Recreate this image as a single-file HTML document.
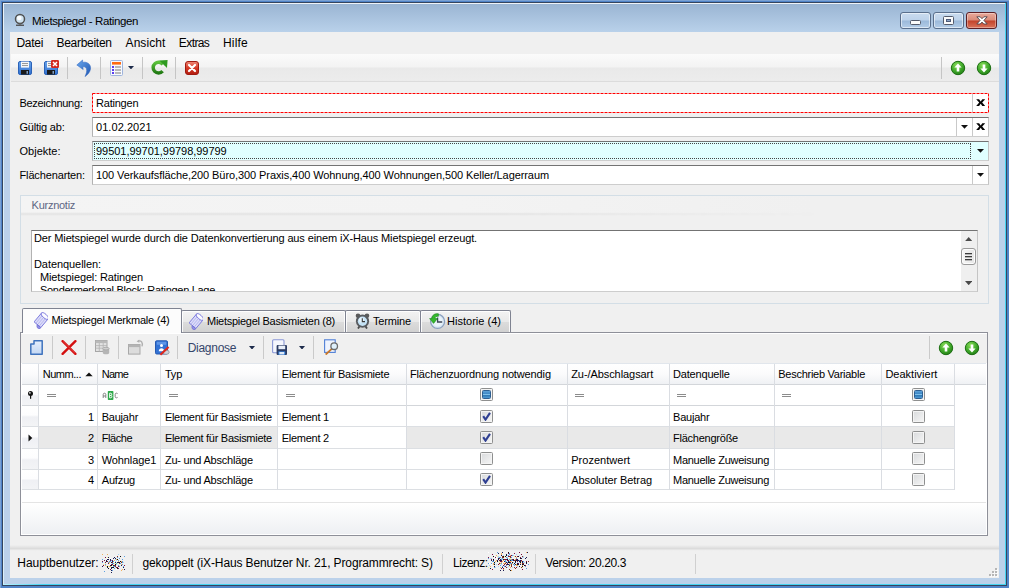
<!DOCTYPE html>
<html><head><meta charset="utf-8"><title>Mietspiegel - Ratingen</title>
<style>
html,body{margin:0;padding:0;}
body{width:1009px;height:588px;overflow:hidden;position:relative;background:#7ba2d3;font-family:"Liberation Sans",sans-serif;font-size:11px;}
div,span,svg{position:absolute;box-sizing:border-box;}
.t{white-space:pre;line-height:16px;height:16px;}
/* window frame */
#f1{left:1px;top:1px;width:1008px;height:587px;background:#4f83c8;}
#f2{left:2px;top:2px;width:1005px;height:584px;background:#35455e;}
#f3{left:3px;top:3px;width:1003px;height:582px;background:linear-gradient(90deg,#b8f2ff 0,#45d3f0 40px);}
#f3a{left:3px;top:3px;width:1002px;height:581px;background:linear-gradient(#eef3f8 0,#dcf0f8 60px);}
#f4{left:4px;top:4px;width:1001px;height:580px;background:#bbd1ea;}
#ttl{left:4px;top:4px;width:1001px;height:28px;background:linear-gradient(#9ab5d3,#b9d1ea);}
#cl{left:10px;top:32px;width:989px;height:546px;background:#f0f0f0;}
/* title buttons */
.cb{top:12px;height:17px;width:31px;border:1px solid #5a6f8c;border-radius:3px;background:linear-gradient(#c9dbef 0%,#bdd2ea 48%,#9bb9da 52%,#b4cde8 100%);box-shadow:inset 0 0 0 1px rgba(255,255,255,.55);}
#bx{border-color:#5c1f25;background:linear-gradient(#e9a99b 0%,#d98a78 48%,#c2422a 52%,#d9735a 100%);box-shadow:inset 0 0 0 1px rgba(255,255,255,.35);}
/* toolbar */
#tb{left:11px;top:54px;width:988px;height:28px;background:linear-gradient(#fbfbfb 0%,#f3f3f3 48%,#e9e9e9 52%,#ececec 100%);border-bottom:1px solid #dcdcdc;}
.sep{width:1px;background:#c5c5c5;}
/* fields */
.fld{left:92px;width:897px;height:20px;background:#fff;border:1px solid #cdcdcd;border-top-color:#737373;border-left-color:#b2b2b2;border-right-color:#c4c4c4;}
.fsep{width:1px;top:0px;height:18px;background:#c9c9c9;}
/* group */
#grp{left:20px;top:195px;width:969px;height:109px;border:1px solid #d3dee6;background:#f0f0f0;}
#grph{left:21px;top:196px;width:967px;height:17px;background:linear-gradient(90deg,#f4f4f4 0%,#f3f3f3 45%,#f0f0f0 82%);}
#grpl{left:21px;top:212px;width:800px;height:4px;background:linear-gradient(#f4f4f4,#e3e3e3 50%,#f0f0f0);-webkit-mask-image:linear-gradient(90deg,#000 60%,transparent);mask-image:linear-gradient(90deg,#000 60%,transparent);}
#ta{left:31px;top:230px;width:947px;height:62px;background:#fff;border:1px solid #cdcdcd;border-top-color:#737373;border-left-color:#b2b2b2;border-right-color:#c4c4c4;overflow:hidden;}
/* tabs */
.tab{top:310px;height:23px;border-radius:2px 2px 0 0;border:1px solid #7f8391;border-bottom:none;background:linear-gradient(#f3f3f3 0%,#e9e9e9 48%,#dcdcdc 52%,#d0d0d0 100%);box-shadow:inset 1px 1px 0 rgba(255,255,255,.85),inset -1px 0 0 rgba(255,255,255,.85);}
#tab1{left:22px;top:308px;width:160px;height:26px;border-radius:2px 2px 0 0;background:#fcfcfc;border:1px solid #7f8391;border-bottom:none;}
#pnl{left:20px;top:332px;width:968px;height:204px;border:1px solid #8e9099;background:#fff;}
#gtb{left:21px;top:333px;width:966px;height:30px;background:#f0f0f0;border-top:1px solid #fff;}
#ghd{left:22px;top:362px;width:964px;height:22px;background:linear-gradient(#ffffff,#f1f1f1);border-bottom:1px solid #d5d5d5;}
.vl{width:1px;background:#dddddd;}
.hl{height:1px;background:#dddddd;}
.chk{width:13px;height:13px;border:1px solid #8e8f8f;border-radius:1.5px;background:linear-gradient(135deg,#d8dadc,#f6f6f6);box-shadow:inset 0 0 0 1px #f4f4f4;}

</style></head>
<body>
<div id="f1"></div><div id="f2"></div><div id="f3"></div><div id="f3a"></div><div id="f4"></div><div id="ttl"></div>
<div id="cl"></div>
<!-- title icon -->
<svg style="left:13px;top:13px" width="14" height="14" viewBox="0 0 14 14"><circle cx="7" cy="6" r="4.5" fill="#cfe3f1" stroke="#4f4f4f" stroke-width="1.5"/><circle cx="6.2" cy="5" r="2.3" fill="#ffffff" opacity=".9"/><rect x="3" y="11.6" width="8" height="1.3" fill="#4a4a4a"/><rect x="5.8" y="10.6" width="2.4" height="1.2" fill="#666"/></svg>
<!-- caption buttons -->
<div class="cb" style="left:900px"><div style="left:9px;top:7px;width:11px;height:5px;background:#fbfbfb;border:1px solid #535a6b;border-radius:1.5px"></div></div>
<div class="cb" style="left:933px"><div style="left:9px;top:3px;width:11px;height:9px;background:#fbfbfb;border:1px solid #535a6b;border-radius:1.5px"></div><div style="left:12px;top:6px;width:5px;height:3px;background:#8aa3c6;border:1px solid #4d5a78"></div></div>
<div class="cb" id="bx" style="left:966px"><svg style="left:9px;top:3.4px" width="12" height="9" viewBox="0 0 12 9"><path d="M0.8 0.8 L4.2 0.8 L6 2.7 L7.8 0.8 L11.2 0.8 L7.9 4.4 L11.2 8 L7.8 8 L6 6.1 L4.2 8 L0.8 8 L4.1 4.4 Z" fill="#fff" stroke="#4e4248" stroke-width=".9" stroke-linejoin="round"/></svg></div>
<!-- main toolbar -->
<div id="tb"></div>
<div class="sep" style="left:67px;top:57px;height:22px"></div>
<div class="sep" style="left:100px;top:57px;height:22px"></div>
<div class="sep" style="left:142px;top:57px;height:22px"></div>
<div class="sep" style="left:175px;top:57px;height:22px"></div>
<div class="sep" style="left:941px;top:57px;height:22px"></div>
<svg width="0" height="0" style="left:0;top:0"><defs>
<linearGradient id="gFl" x1="0" y1="0" x2="0" y2="1"><stop offset="0" stop-color="#6aa5ea"/><stop offset="1" stop-color="#2f6fd0"/></linearGradient>
<radialGradient id="gGr" cx=".4" cy=".3" r=".8"><stop offset="0" stop-color="#8ade5a"/><stop offset=".55" stop-color="#3fa82a"/><stop offset="1" stop-color="#1d7412"/></radialGradient>
<linearGradient id="gRd" x1="0" y1="0" x2="0" y2="1"><stop offset="0" stop-color="#f08a78"/><stop offset=".5" stop-color="#d63a26"/><stop offset="1" stop-color="#b01c10"/></linearGradient>
<linearGradient id="gUn" x1="0" y1="0" x2="1" y2="1"><stop offset="0" stop-color="#6aa8ee"/><stop offset="1" stop-color="#1f55b0"/></linearGradient>
<linearGradient id="gGa" x1="0" y1="0" x2="0" y2="1"><stop offset="0" stop-color="#5cc23c"/><stop offset="1" stop-color="#217a14"/></linearGradient>
</defs></svg>
<svg style="left:18px;top:61px" width="14" height="14" viewBox="0 0 14 14"><rect x=".5" y=".5" width="13" height="13" rx="1.5" fill="url(#gFl)" stroke="#2a62b8"/><rect x="3" y="0.6" width="8" height="6" fill="#f4f6f8"/><rect x="4" y="2" width="6" height="1" fill="#9a9a9a"/><rect x="4" y="4" width="6" height="1" fill="#9a9a9a"/><rect x="3" y="9" width="8" height="4.6" fill="#1a1a1a"/><rect x="8.6" y="10" width="1.2" height="2.8" fill="#9cc0ee"/></svg>
<svg style="left:44px;top:61px" width="14" height="14" viewBox="0 0 14 14"><rect x=".5" y=".5" width="13" height="13" rx="1.5" fill="url(#gFl)" stroke="#2a62b8"/><rect x="3" y="0.6" width="8" height="6" fill="#f4f6f8"/><rect x="4" y="2" width="6" height="1" fill="#9a9a9a"/><rect x="4" y="4" width="6" height="1" fill="#9a9a9a"/><rect x="3" y="9" width="8" height="4.6" fill="#1a1a1a"/><rect x="8.6" y="10" width="1.2" height="2.8" fill="#9cc0ee"/></svg>
<svg style="left:51px;top:60px" width="8" height="8" viewBox="0 0 8 8"><rect x="0" y="0" width="8" height="8" rx="1.2" fill="#d22a1e"/><path d="M2 2 L6 6 M6 2 L2 6" stroke="#fff" stroke-width="1.5"/></svg>
<svg style="left:76px;top:59px" width="16" height="18" viewBox="0 0 16 18"><path d="M0.8 6 L6.6 1 L6.5 3.3 C11 2.5 15.2 5 14.5 10 C14 13.2 11.8 15.8 9 17.6 C10.4 14.4 11.2 11.8 10.4 9.6 C9.8 8 8.4 7.6 6.8 7.8 L7.2 10.6 Z" fill="url(#gUn)" stroke="#2a62c0" stroke-width=".5"/></svg>
<svg style="left:110px;top:60px" width="13" height="16" viewBox="0 0 13 16"><rect x=".5" y=".5" width="12" height="15" rx="1" fill="#f7f9fd" stroke="#9fb4dc"/><rect x="2" y="2" width="9" height="2.6" fill="#ff6a10"/><rect x="2" y="6" width="2" height="2" fill="#5a3cf0"/><rect x="2" y="9" width="2" height="2" fill="#5a3cf0"/><rect x="2" y="12" width="2" height="2" fill="#5a3cf0"/><rect x="5" y="6.5" width="6" height="1" fill="#7a7a7a"/><rect x="5" y="9.5" width="6" height="1" fill="#7a7a7a"/><rect x="5" y="12.5" width="6" height="1" fill="#7a7a7a"/></svg>
<svg style="left:128px;top:66px" width="6" height="3.4" viewBox="0 0 6 3.4"><path d="M0 0 L6 0 L3.0 3.4 Z" fill="#1c2a4a"/></svg>
<svg style="left:150px;top:59px" width="18" height="17" viewBox="0 0 18 17"><path d="M12.9 5.4 A5.4 5.4 0 1 0 12.6 12.2" fill="none" stroke="url(#gGa)" stroke-width="3.5"/><path d="M9.4 1.6 L17.6 1 L17 9 Z" fill="#2f9a20"/></svg>
<svg style="left:185px;top:61px" width="14" height="14" viewBox="0 0 14 14"><rect x=".5" y=".5" width="13" height="13" rx="2.5" fill="url(#gRd)" stroke="#a01a10"/><path d="M4 4 L10 10 M10 4 L4 10" stroke="#fff" stroke-width="2.2" stroke-linecap="round"/></svg>
<svg style="left:950px;top:60px" width="16" height="16" viewBox="0 0 16 16"><circle cx="8" cy="8" r="6.7" fill="url(#gGr)" stroke="#1c6e12" stroke-width="1"/><path d="M8 3.6 L11.6 7.6 L9.3 7.6 L9.3 11.6 L6.7 11.6 L6.7 7.6 L4.4 7.6 Z" fill="#fff"/></svg>
<svg style="left:976px;top:60px" width="16" height="16" viewBox="0 0 16 16"><circle cx="8" cy="8" r="6.7" fill="url(#gGr)" stroke="#1c6e12" stroke-width="1"/><path d="M8 3.6 L11.6 7.6 L9.3 7.6 L9.3 11.6 L6.7 11.6 L6.7 7.6 L4.4 7.6 Z" fill="#fff" transform="rotate(180 8 8)"/></svg>
<!-- fields -->
<div class="fld" style="top:93px;border:none"><div class="fsep" style="left:880px;top:1px"></div></div><svg style="left:92px;top:93px" width="897" height="20"><rect x=".5" y=".5" width="896" height="19" fill="none" stroke="#ff0000" stroke-width="1" stroke-dasharray="3 1"/></svg>
<div class="fld" style="top:117px"><div class="fsep" style="left:863px"></div><div class="fsep" style="left:879px"></div></div>
<div class="fld" style="top:141px;background:#e0ffff"><div style="left:1px;top:1px;width:877px;height:16px;border:1px dotted #444"></div></div>
<div class="fld" style="top:165px"><div class="fsep" style="left:879px"></div></div>
<svg style="left:975.8px;top:99px" width="9.4" height="7.2" viewBox="0 0 9.4 7.2"><path d="M0.2 0.2 L3.1 0.2 L4.7 2.4 L6.3 0.2 L9.2 0.2 L6.2 3.6 L9.2 7 L6.3 7 L4.7 4.8 L3.1 7 L0.2 7 L3.2 3.6 Z" fill="#050505"/></svg>
<svg style="left:975.8px;top:123px" width="9.4" height="7.2" viewBox="0 0 9.4 7.2"><path d="M0.2 0.2 L3.1 0.2 L4.7 2.4 L6.3 0.2 L9.2 0.2 L6.2 3.6 L9.2 7 L6.3 7 L4.7 4.8 L3.1 7 L0.2 7 L3.2 3.6 Z" fill="#050505"/></svg>
<svg style="left:961px;top:125px" width="7" height="3.8" viewBox="0 0 7 3.8"><path d="M0 0 L7 0 L3.5 3.8 Z" fill="#111"/></svg>
<svg style="left:977px;top:149px" width="7" height="3.8" viewBox="0 0 7 3.8"><path d="M0 0 L7 0 L3.5 3.8 Z" fill="#111"/></svg>
<svg style="left:977px;top:173px" width="7" height="3.8" viewBox="0 0 7 3.8"><path d="M0 0 L7 0 L3.5 3.8 Z" fill="#111"/></svg>
<!-- group -->
<div id="grp"></div><div id="grph"></div><div id="grpl"></div>
<div id="ta"></div>
<!-- tabs -->
<div class="tab" style="left:181px;width:165px"></div>
<div class="tab" style="left:345px;width:76px"></div>
<div class="tab" style="left:420px;width:91px"></div>
<div id="pnl"></div>
<div id="tab1"></div>
<div id="gtb"></div>
<div class="sep" style="left:52px;top:336px;height:23px;background:#cacaca"></div>
<div class="sep" style="left:85px;top:336px;height:23px;background:#cacaca"></div>
<div class="sep" style="left:118px;top:336px;height:23px;background:#cacaca"></div>
<div class="sep" style="left:177px;top:336px;height:23px;background:#cacaca"></div>
<div class="sep" style="left:263px;top:336px;height:23px;background:#cacaca"></div>
<div class="sep" style="left:313px;top:336px;height:23px;background:#cacaca"></div>
<div class="sep" style="left:929px;top:336px;height:23px;background:#cacaca"></div>
<svg style="left:29.5px;top:340px" width="13" height="15" viewBox="0 0 13 15"><defs><linearGradient id="gNd" x1="0" y1="0" x2="0" y2="1"><stop offset="0" stop-color="#e6effc"/><stop offset="1" stop-color="#c3d7f3"/></linearGradient></defs><path d="M4 .8 H12.2 V14.2 H.8 V4 H4 Z" fill="url(#gNd)" stroke="#3f73bd" stroke-width="1.5" stroke-linejoin="round"/></svg>
<svg style="left:61px;top:340px" width="16" height="15" viewBox="0 0 16 15"><path d="M1.6 1.2 L14.4 13.8 M14.4 1.2 L1.6 13.8" stroke="#d40f0f" stroke-width="2.4" stroke-linecap="round"/><path d="M2.2 1.6 L13.8 13 " stroke="#f06060" stroke-width=".6"/></svg>
<svg style="left:94.5px;top:340px" width="15" height="15" viewBox="0 0 15 15"><rect x=".5" y=".5" width="11.5" height="11" fill="#e2e2e2" stroke="#a6a6a6"/><rect x=".5" y=".5" width="11.5" height="2.6" fill="#b9b9b9"/><path d="M.5 5.6 H12 M.5 8.2 H12 M4.3 3 V11.5 M8.2 3 V11.5" stroke="#b3b3b3" stroke-width=".8"/><path d="M7.8 8.6 V13 C7.8 14.8 14.2 14.8 14.2 13 V8.6 Z" fill="#b5b5b5"/><ellipse cx="11" cy="8.6" rx="3.2" ry="1.3" fill="#cfcfcf" stroke="#a0a0a0" stroke-width=".7"/></svg>
<svg style="left:128px;top:339px" width="16" height="16" viewBox="0 0 16 16"><rect x=".5" y="5.5" width="11.5" height="9.6" fill="#dcdcdc" stroke="#a8a8a8"/><rect x=".5" y="5.5" width="11.5" height="2.6" fill="#b4b4b4"/><path d="M10 2.2 C13.2 1 15.2 3.6 14 7.4" fill="none" stroke="#b0b0b0" stroke-width="1.4"/><path d="M8.6 2.4 L11.2 .4 L11.4 3.8 Z" fill="#b0b0b0"/></svg>
<svg style="left:155px;top:340px" width="15" height="16" viewBox="0 0 15 16"><rect x=".5" y=".8" width="12" height="13.2" rx="1.2" fill="#3272d4" stroke="#2559b0"/><rect x="1.8" y="1.8" width="9.4" height="3" fill="#5e95e6"/><circle cx="6.5" cy="5.6" r="1.5" fill="#fff"/><path d="M3.8 11.2 C3.8 7.2 9.2 7.2 9.2 11.2 Z" fill="#fff"/><ellipse cx="11" cy="12.2" rx="3.2" ry="2.2" fill="#cfd3da" stroke="#8d929c" stroke-width=".8"/><path d="M5.4 14.8 L13.6 7" stroke="#e0261a" stroke-width="2"/></svg>
<svg style="left:249px;top:345.5px" width="6" height="3.6" viewBox="0 0 6 3.6"><path d="M0 0 L6 0 L3.0 3.6 Z" fill="#1c2a4a"/></svg>
<svg style="left:272px;top:339px" width="16" height="17" viewBox="0 0 16 17"><rect x=".6" y=".8" width="11.4" height="13" rx="1" fill="#f4f6fd" stroke="#8a98d6" stroke-width="1.1"/><rect x="4.6" y="6" width="10.4" height="10" rx="1" fill="#2b3b63"/><rect x="6.4" y="6.6" width="6.8" height="3.6" fill="#e8eef8"/><rect x="6.4" y="12.4" width="6.8" height="3.4" fill="#3a86e0"/><rect x="7.4" y="13" width="4.8" height="2.4" fill="#dfeaf8"/></svg>
<svg style="left:299px;top:345.5px" width="6" height="3.6" viewBox="0 0 6 3.6"><path d="M0 0 L6 0 L3.0 3.6 Z" fill="#1c2a4a"/></svg>
<svg style="left:324px;top:339px" width="15" height="16" viewBox="0 0 15 16"><rect x=".6" y=".8" width="10.6" height="12.6" fill="#eef3fd" stroke="#4f7fd6" stroke-width="1.1"/><path d="M8.6 9.2 L2.2 15" stroke="#c9782a" stroke-width="1.8" stroke-linecap="round"/><circle cx="10.2" cy="7.2" r="3.3" fill="#dff0fb" stroke="#6b6b6b" stroke-width="1.3"/></svg>
<svg style="left:938px;top:339.5px" width="16" height="16" viewBox="0 0 16 16"><circle cx="8" cy="8" r="6.7" fill="url(#gGr)" stroke="#1c6e12" stroke-width="1"/><path d="M8 3.6 L11.6 7.6 L9.3 7.6 L9.3 11.6 L6.7 11.6 L6.7 7.6 L4.4 7.6 Z" fill="#fff"/></svg>
<svg style="left:964px;top:339.5px" width="16" height="16" viewBox="0 0 16 16"><circle cx="8" cy="8" r="6.7" fill="url(#gGr)" stroke="#1c6e12" stroke-width="1"/><path d="M8 3.6 L11.6 7.6 L9.3 7.6 L9.3 11.6 L6.7 11.6 L6.7 7.6 L4.4 7.6 Z" fill="#fff" transform="rotate(180 8 8)"/></svg>
<div style="left:22px;top:385px;width:16px;height:20px;background:linear-gradient(#ffffff 0%,#fdfdfe 45%,#eff0f4 55%,#f3f4f6 100%)"></div>
<div style="left:22px;top:406px;width:16px;height:20px;background:linear-gradient(#ffffff 0%,#fdfdfe 45%,#eff0f4 55%,#f3f4f6 100%)"></div>
<div style="left:22px;top:427px;width:16px;height:21px;background:linear-gradient(#ffffff 0%,#fdfdfe 45%,#eff0f4 55%,#f3f4f6 100%)"></div>
<div style="left:22px;top:449px;width:16px;height:20px;background:linear-gradient(#ffffff 0%,#fdfdfe 45%,#eff0f4 55%,#f3f4f6 100%)"></div>
<div style="left:22px;top:470px;width:16px;height:19px;background:linear-gradient(#ffffff 0%,#fdfdfe 45%,#eff0f4 55%,#f3f4f6 100%)"></div>
<div style="left:39px;top:427px;width:915px;height:21px;background:#e9e9e9"></div>
<div style="left:278px;top:427px;width:128px;height:21px;background:#fff"></div>
<div style="left:22px;top:363px;width:964px;height:21px;background:linear-gradient(#ffffff 0%,#fbfbfc 50%,#eff1f4 100%);border-top:1px solid #e1e6ec"></div>
<div class="hl" style="left:22px;top:384px;width:964px;background:#d3d6da"></div>
<div class="hl" style="left:22px;top:405px;width:933px;background:#d3d6da"></div>
<div class="hl" style="left:22px;top:426px;width:933px;background:#dcdfe3"></div>
<div class="hl" style="left:22px;top:448px;width:933px;background:#dcdfe3"></div>
<div class="hl" style="left:22px;top:469px;width:933px;background:#dcdfe3"></div>
<div class="hl" style="left:22px;top:489px;width:933px;background:#dcdfe3"></div>
<div class="vl" style="left:38px;top:364px;height:126px;background:#dadde2"></div>
<div class="vl" style="left:97px;top:364px;height:126px;background:#dadde2"></div>
<div class="vl" style="left:160px;top:364px;height:126px;background:#dadde2"></div>
<div class="vl" style="left:277px;top:364px;height:126px;background:#dadde2"></div>
<div class="vl" style="left:406px;top:364px;height:126px;background:#dadde2"></div>
<div class="vl" style="left:567px;top:364px;height:126px;background:#dadde2"></div>
<div class="vl" style="left:669px;top:364px;height:126px;background:#dadde2"></div>
<div class="vl" style="left:774px;top:364px;height:126px;background:#dadde2"></div>
<div class="vl" style="left:881px;top:364px;height:126px;background:#dadde2"></div>
<div class="vl" style="left:954px;top:364px;height:126px;background:#dadde2"></div>
<div class="hl" style="left:22px;top:502px;width:964px;background:#e4e4e4"></div>
<div style="left:22px;top:503px;width:964px;height:31px;background:linear-gradient(#ffffff,#eef0f3)"></div>
<svg style="left:85px;top:372px" width="8" height="5" viewBox="0 0 8 5"><path d="M0.3 4.2 L4 0.4 L7.7 4.2 Z" fill="#111"/></svg>
<svg style="left:27px;top:391px" width="7" height="8" viewBox="0 0 7 8"><circle cx="3.5" cy="2.6" r="2.5" fill="#111"/><rect x="3" y="4" width="1.2" height="3.8" fill="#111"/><circle cx="2.9" cy="1.9" r=".8" fill="#fff"/></svg>
<div style="left:47px;top:394px;width:9px;height:1px;background:#8c8c8c"></div><div style="left:47px;top:396px;width:9px;height:1px;background:#8c8c8c"></div>
<div style="left:169px;top:394px;width:9px;height:1px;background:#8c8c8c"></div><div style="left:169px;top:396px;width:9px;height:1px;background:#8c8c8c"></div>
<div style="left:286px;top:394px;width:9px;height:1px;background:#8c8c8c"></div><div style="left:286px;top:396px;width:9px;height:1px;background:#8c8c8c"></div>
<div style="left:575px;top:394px;width:9px;height:1px;background:#8c8c8c"></div><div style="left:575px;top:396px;width:9px;height:1px;background:#8c8c8c"></div>
<div style="left:677px;top:394px;width:9px;height:1px;background:#8c8c8c"></div><div style="left:677px;top:396px;width:9px;height:1px;background:#8c8c8c"></div>
<div style="left:782px;top:394px;width:9px;height:1px;background:#8c8c8c"></div><div style="left:782px;top:396px;width:9px;height:1px;background:#8c8c8c"></div>
<svg style="left:102px;top:390px" width="17" height="11" viewBox="0 0 17 11"><rect x="5.8" y="1" width="5.6" height="9" rx=".8" fill="#2fa84a"/><path d="M1.2 8 V4.4 C1.2 2.8 3.8 2.8 3.8 4.4 V8 M1.2 6 H3.8" fill="none" stroke="#777" stroke-width=".9"/><path d="M7.6 3.2 V7.8 H9 C10.2 7.8 10.2 5.6 9 5.5 H7.6 M9 5.5 C10 5.4 10 3.2 9 3.2 H7.6" fill="none" stroke="#fff" stroke-width=".9"/><path d="M15.6 3.6 C14.8 2.8 13.2 3 13.2 4.4 V6.6 C13.2 8 14.8 8.2 15.6 7.4" fill="none" stroke="#777" stroke-width=".9"/></svg>
<svg style="left:28px;top:434px" width="5" height="8" viewBox="0 0 5 8"><path d="M0.5 0.5 L4.3 4 L0.5 7.5 Z" fill="#111"/></svg>
<div class="chk" style="left:480px;top:410px"><svg style="left:1px;top:1px" width="9" height="9" viewBox="0 0 9 9"><path d="M1.2 4.2 L3.5 7.6 L8 0.9" fill="none" stroke="#2f3f92" stroke-width="2.1"/></svg></div>
<div class="chk" style="left:912px;top:410px"></div>
<div class="chk" style="left:480px;top:431px"><svg style="left:1px;top:1px" width="9" height="9" viewBox="0 0 9 9"><path d="M1.2 4.2 L3.5 7.6 L8 0.9" fill="none" stroke="#2f3f92" stroke-width="2.1"/></svg></div>
<div class="chk" style="left:912px;top:431px"></div>
<div class="chk" style="left:480px;top:452px"></div>
<div class="chk" style="left:912px;top:452px"></div>
<div class="chk" style="left:480px;top:473px"><svg style="left:1px;top:1px" width="9" height="9" viewBox="0 0 9 9"><path d="M1.2 4.2 L3.5 7.6 L8 0.9" fill="none" stroke="#2f3f92" stroke-width="2.1"/></svg></div>
<div class="chk" style="left:912px;top:473px"></div>
<div class="chk" style="left:480px;top:388px"><div style="left:1px;top:1px;width:9px;height:9px;background:linear-gradient(#5fa3d8 0%,#3f88c6 35%,#7fc0ea 50%,#2f78b5 65%,#4f9ad4 100%);border:1px solid #2d5f92;border-radius:1.5px"></div></div>
<div class="chk" style="left:912px;top:388px"><div style="left:1px;top:1px;width:9px;height:9px;background:linear-gradient(#5fa3d8 0%,#3f88c6 35%,#7fc0ea 50%,#2f78b5 65%,#4f9ad4 100%);border:1px solid #2d5f92;border-radius:1.5px"></div></div>
<svg style="left:34px;top:312px" width="14" height="17" viewBox="0 0 14 17"><g transform="rotate(40 7 8.5)"><rect x="2.6" y="2.5" width="8.8" height="11.5" fill="#dcdcf8" stroke="#7a78dc" stroke-width=".9"/><path d="M4.8 4.4 V13.6 M7 4.4 V13.6 M9.2 4.4 V13.6" stroke="#a9a9ee" stroke-width=".7"/><ellipse cx="7" cy="2.6" rx="4.5" ry="2" fill="#fbfbff" stroke="#7a78dc" stroke-width=".9"/><path d="M6.6 14 H11.4 V15.8 C10 17.2 7.6 16.6 6.6 14 Z" fill="#908ee6" stroke="#6a68d0" stroke-width=".6"/></g></svg>
<svg style="left:189px;top:313px" width="14" height="17" viewBox="0 0 14 17"><g transform="rotate(40 7 8.5)"><rect x="2.6" y="2.5" width="8.8" height="11.5" fill="#dcdcf8" stroke="#7a78dc" stroke-width=".9"/><path d="M4.8 4.4 V13.6 M7 4.4 V13.6 M9.2 4.4 V13.6" stroke="#a9a9ee" stroke-width=".7"/><ellipse cx="7" cy="2.6" rx="4.5" ry="2" fill="#fbfbff" stroke="#7a78dc" stroke-width=".9"/><path d="M6.6 14 H11.4 V15.8 C10 17.2 7.6 16.6 6.6 14 Z" fill="#908ee6" stroke="#6a68d0" stroke-width=".6"/></g></svg>
<svg style="left:354.5px;top:313px" width="15" height="16" viewBox="0 0 15 16"><circle cx="3" cy="2.8" r="2.3" fill="#5a5a5a"/><circle cx="12" cy="2.8" r="2.3" fill="#5a5a5a"/><path d="M3 15.6 L5 12.6 M12 15.6 L10 12.6" stroke="#4a4a4a" stroke-width="1.8"/><circle cx="7.5" cy="8.2" r="6.6" fill="#595c60"/><circle cx="7.5" cy="8.2" r="4.7" fill="#c4e2f5"/><circle cx="6.6" cy="7" r="2.6" fill="#e6f4fc"/><path d="M7.3 5.2 V8.6 H10" stroke="#3a3a3a" stroke-width="1.1" fill="none"/></svg>
<svg style="left:429px;top:313px" width="17" height="17" viewBox="0 0 17 17"><circle cx="8.6" cy="8.4" r="7" fill="#d9e8f4" stroke="#8a9fbe" stroke-width="1.3"/><circle cx="8.6" cy="8.4" r="5" fill="#eaf3fa"/><path d="M8.6 4.4 V9 H13.2" stroke="#3d4656" stroke-width="1.3" fill="none"/><path d="M9.4 0.8 C5.6 0.2 2.8 2.4 2.9 5.6 L0.6 5.6 L4.6 10.4 L8.4 5.6 L6.1 5.6 C6.1 3.9 7.4 3 9.4 3.3 Z" fill="#35b82c" stroke="#1d8a1a" stroke-width=".6"/></svg>
<div style="left:961px;top:231px;width:16px;height:60px;background:#efefef"></div>
<svg style="left:964.5px;top:237px" width="7.4" height="4.2" viewBox="0 0 7.4 4.2"><path d="M0 4.2 L3.7 0 L7.4 4.2 Z" fill="#4a4a4a"/></svg>
<svg style="left:964.5px;top:281.2px" width="7.4" height="4.2" viewBox="0 0 7.4 4.2"><path d="M0 0 L3.7 4.2 L7.4 0 Z" fill="#4a4a4a"/></svg>
<div style="left:961px;top:248px;width:15px;height:17px;border:1px solid #9a9a9a;border-radius:3px;background:linear-gradient(90deg,#f6f6f6,#e6e6e6);box-shadow:inset 0 0 0 1px #fcfcfc"></div>
<div style="left:965px;top:253px;width:7px;height:1px;background:#3c3c3c"></div><div style="left:965px;top:254px;width:7px;height:1px;background:#b4b4b4"></div>
<div style="left:965px;top:256px;width:7px;height:1px;background:#3c3c3c"></div><div style="left:965px;top:257px;width:7px;height:1px;background:#b4b4b4"></div>
<div style="left:965px;top:259px;width:7px;height:1px;background:#3c3c3c"></div><div style="left:965px;top:260px;width:7px;height:1px;background:#b4b4b4"></div>
<div style="left:996px;top:569px;width:2px;height:2px;background:#fbfbfb"></div><div style="left:995.2px;top:568.2px;width:1.6px;height:1.6px;background:#b6b6b6"></div>
<div style="left:993px;top:572px;width:2px;height:2px;background:#fbfbfb"></div><div style="left:992.2px;top:571.2px;width:1.6px;height:1.6px;background:#b6b6b6"></div>
<div style="left:996px;top:572px;width:2px;height:2px;background:#fbfbfb"></div><div style="left:995.2px;top:571.2px;width:1.6px;height:1.6px;background:#b6b6b6"></div>
<div style="left:990px;top:575px;width:2px;height:2px;background:#fbfbfb"></div><div style="left:989.2px;top:574.2px;width:1.6px;height:1.6px;background:#b6b6b6"></div>
<div style="left:993px;top:575px;width:2px;height:2px;background:#fbfbfb"></div><div style="left:992.2px;top:574.2px;width:1.6px;height:1.6px;background:#b6b6b6"></div>
<div style="left:996px;top:575px;width:2px;height:2px;background:#fbfbfb"></div><div style="left:995.2px;top:574.2px;width:1.6px;height:1.6px;background:#b6b6b6"></div>
<svg style="left:102px;top:554px" width="23" height="19" viewBox="0 0 23 19"><rect x="9" y="11" width="1" height="1" fill="#111111"/><rect x="22" y="11" width="1" height="1" fill="#7a1040"/><rect x="10" y="10" width="1" height="1" fill="#f0f0a0"/><rect x="12" y="11" width="1" height="1" fill="#a8d4f4"/><rect x="14" y="10" width="1" height="1" fill="#a8d4f4"/><rect x="19" y="11" width="1" height="1" fill="#1a1a50"/><rect x="5" y="5" width="1" height="1" fill="#7a1040"/><rect x="5" y="7" width="1" height="1" fill="#1a1a50"/><rect x="10" y="11" width="1" height="1" fill="#7a1040"/><rect x="4" y="7" width="1" height="1" fill="#111111"/><rect x="15" y="14" width="1" height="1" fill="#111111"/><rect x="12" y="11" width="1" height="1" fill="#8a3020"/><rect x="13" y="10" width="1" height="1" fill="#1a1a50"/><rect x="3" y="9" width="1" height="1" fill="#5aa0e0"/><rect x="8" y="11" width="1" height="1" fill="#1a1a50"/><rect x="9" y="6" width="1" height="1" fill="#ffffff"/><rect x="9" y="14" width="1" height="1" fill="#5aa0e0"/><rect x="10" y="6" width="1" height="1" fill="#7a1040"/><rect x="16" y="12" width="1" height="1" fill="#5aa0e0"/><rect x="15" y="13" width="1" height="1" fill="#7a1040"/><rect x="13" y="9" width="1" height="1" fill="#f0f0a0"/><rect x="0" y="5" width="1" height="1" fill="#5aa0e0"/><rect x="8" y="12" width="1" height="1" fill="#f0b060"/><rect x="5" y="7" width="1" height="1" fill="#7a1040"/><rect x="18" y="7" width="1" height="1" fill="#111111"/><rect x="21" y="12" width="1" height="1" fill="#5aa0e0"/><rect x="0" y="0" width="1" height="1" fill="#f0b060"/><rect x="10" y="13" width="1" height="1" fill="#111111"/><rect x="2" y="17" width="1" height="1" fill="#5aa0e0"/><rect x="13" y="11" width="1" height="1" fill="#7a1040"/><rect x="12" y="12" width="1" height="1" fill="#8a3020"/><rect x="11" y="13" width="1" height="1" fill="#f0b060"/><rect x="17" y="11" width="1" height="1" fill="#f0f0a0"/><rect x="10" y="11" width="1" height="1" fill="#a8d4f4"/><rect x="14" y="6" width="1" height="1" fill="#a8d4f4"/><rect x="21" y="8" width="1" height="1" fill="#a8d4f4"/><rect x="15" y="8" width="1" height="1" fill="#1a1a50"/><rect x="16" y="14" width="1" height="1" fill="#7a1040"/><rect x="3" y="10" width="1" height="1" fill="#5aa0e0"/><rect x="10" y="11" width="1" height="1" fill="#f0f0a0"/><rect x="5" y="13" width="1" height="1" fill="#1a1a50"/><rect x="8" y="4" width="1" height="1" fill="#ffffff"/><rect x="5" y="3" width="1" height="1" fill="#f0b060"/><rect x="20" y="5" width="1" height="1" fill="#111111"/><rect x="13" y="5" width="1" height="1" fill="#a8d4f4"/><rect x="5" y="12" width="1" height="1" fill="#a8d4f4"/><rect x="13" y="10" width="1" height="1" fill="#1a1a50"/><rect x="8" y="10" width="1" height="1" fill="#ffffff"/><rect x="11" y="9" width="1" height="1" fill="#1a1a50"/><rect x="9" y="8" width="1" height="1" fill="#1a1a50"/><rect x="8" y="7" width="1" height="1" fill="#5aa0e0"/><rect x="19" y="7" width="1" height="1" fill="#f0b060"/><rect x="20" y="15" width="1" height="1" fill="#f0b060"/><rect x="6" y="9" width="1" height="1" fill="#1a1a50"/><rect x="16" y="11" width="1" height="1" fill="#5aa0e0"/><rect x="1" y="10" width="1" height="1" fill="#f0f0a0"/><rect x="7" y="9" width="1" height="1" fill="#f0f0a0"/><rect x="20" y="5" width="1" height="1" fill="#5aa0e0"/><rect x="9" y="6" width="1" height="1" fill="#5aa0e0"/><rect x="16" y="7" width="1" height="1" fill="#1a1a50"/><rect x="0" y="8" width="1" height="1" fill="#5aa0e0"/><rect x="5" y="5" width="1" height="1" fill="#1a1a50"/><rect x="15" y="2" width="1" height="1" fill="#8a3020"/><rect x="12" y="6" width="1" height="1" fill="#f0b060"/><rect x="10" y="10" width="1" height="1" fill="#7a1040"/><rect x="13" y="4" width="1" height="1" fill="#1a1a50"/><rect x="5" y="0" width="1" height="1" fill="#f0b060"/><rect x="15" y="3" width="1" height="1" fill="#5aa0e0"/><rect x="17" y="8" width="1" height="1" fill="#1a1a50"/><rect x="17" y="12" width="1" height="1" fill="#5aa0e0"/><rect x="14" y="15" width="1" height="1" fill="#ffffff"/><rect x="15" y="5" width="1" height="1" fill="#111111"/><rect x="6" y="14" width="1" height="1" fill="#111111"/><rect x="16" y="12" width="1" height="1" fill="#8a3020"/><rect x="11" y="4" width="1" height="1" fill="#1a1a50"/><rect x="3" y="11" width="1" height="1" fill="#7a1040"/><rect x="16" y="0" width="1" height="1" fill="#a8d4f4"/><rect x="1" y="11" width="1" height="1" fill="#7a1040"/><rect x="10" y="7" width="1" height="1" fill="#1a1a50"/><rect x="19" y="10" width="1" height="1" fill="#f0b060"/><rect x="12" y="7" width="1" height="1" fill="#ffffff"/><rect x="20" y="8" width="1" height="1" fill="#5aa0e0"/><rect x="15" y="13" width="1" height="1" fill="#7a1040"/><rect x="6" y="5" width="1" height="1" fill="#1a1a50"/><rect x="0" y="12" width="1" height="1" fill="#1a1a50"/><rect x="15" y="9" width="1" height="1" fill="#f0f0a0"/><rect x="12" y="14" width="1" height="1" fill="#5aa0e0"/><rect x="0" y="7" width="1" height="1" fill="#7a1040"/><rect x="16" y="7" width="1" height="1" fill="#f0b060"/><rect x="5" y="3" width="1" height="1" fill="#f0f0a0"/><rect x="3" y="9" width="1" height="1" fill="#f0f0a0"/><rect x="12" y="3" width="1" height="1" fill="#1a1a50"/><rect x="14" y="13" width="1" height="1" fill="#8a3020"/><rect x="13" y="10" width="1" height="1" fill="#111111"/><rect x="3" y="8" width="1" height="1" fill="#7a1040"/><rect x="13" y="8" width="1" height="1" fill="#1a1a50"/><rect x="9" y="16" width="1" height="1" fill="#f0f0a0"/><rect x="10" y="9" width="1" height="1" fill="#7a1040"/><rect x="3" y="11" width="1" height="1" fill="#f0f0a0"/><rect x="8" y="7" width="1" height="1" fill="#5aa0e0"/><rect x="3" y="11" width="1" height="1" fill="#f0b060"/><rect x="6" y="9" width="1" height="1" fill="#f0f0a0"/><rect x="22" y="2" width="1" height="1" fill="#5aa0e0"/><rect x="13" y="13" width="1" height="1" fill="#a8d4f4"/><rect x="16" y="12" width="1" height="1" fill="#7a1040"/><rect x="8" y="5" width="1" height="1" fill="#1a1a50"/><rect x="6" y="3" width="1" height="1" fill="#1a1a50"/><rect x="20" y="7" width="1" height="1" fill="#5aa0e0"/><rect x="19" y="16" width="1" height="1" fill="#f0b060"/><rect x="5" y="12" width="1" height="1" fill="#111111"/><rect x="13" y="7" width="1" height="1" fill="#a8d4f4"/><rect x="17" y="9" width="1" height="1" fill="#a8d4f4"/><rect x="13" y="12" width="1" height="1" fill="#8a3020"/><rect x="7" y="12" width="1" height="1" fill="#f0b060"/><rect x="10" y="9" width="1" height="1" fill="#5aa0e0"/><rect x="6" y="9" width="1" height="1" fill="#7a1040"/><rect x="22" y="15" width="1" height="1" fill="#1a1a50"/><rect x="14" y="9" width="1" height="1" fill="#5aa0e0"/><rect x="9" y="18" width="1" height="1" fill="#1a1a50"/><rect x="11" y="11" width="1" height="1" fill="#a8d4f4"/><rect x="17" y="4" width="1" height="1" fill="#5aa0e0"/><rect x="4" y="12" width="1" height="1" fill="#f0f0a0"/><rect x="2" y="6" width="1" height="1" fill="#7a1040"/><rect x="9" y="16" width="1" height="1" fill="#1a1a50"/><rect x="9" y="10" width="1" height="1" fill="#7a1040"/><rect x="3" y="3" width="1" height="1" fill="#7a1040"/><rect x="7" y="7" width="1" height="1" fill="#5aa0e0"/><rect x="16" y="6" width="1" height="1" fill="#5aa0e0"/><rect x="18" y="9" width="1" height="1" fill="#5aa0e0"/><rect x="10" y="8" width="1" height="1" fill="#8a3020"/><rect x="11" y="11" width="1" height="1" fill="#1a1a50"/><rect x="11" y="12" width="1" height="1" fill="#5aa0e0"/><rect x="6" y="5" width="1" height="1" fill="#1a1a50"/><rect x="9" y="14" width="1" height="1" fill="#1a1a50"/><rect x="10" y="16" width="1" height="1" fill="#5aa0e0"/><rect x="12" y="9" width="1" height="1" fill="#f0f0a0"/><rect x="7" y="8" width="1" height="1" fill="#f0b060"/><rect x="11" y="13" width="1" height="1" fill="#111111"/><rect x="14" y="5" width="1" height="1" fill="#f0b060"/><rect x="16" y="8" width="1" height="1" fill="#1a1a50"/><rect x="17" y="9" width="1" height="1" fill="#8a3020"/><rect x="11" y="7" width="1" height="1" fill="#5aa0e0"/><rect x="20" y="10" width="1" height="1" fill="#5aa0e0"/><rect x="9" y="10" width="1" height="1" fill="#111111"/><rect x="18" y="2" width="1" height="1" fill="#111111"/><rect x="19" y="8" width="1" height="1" fill="#8a3020"/><rect x="9" y="13" width="1" height="1" fill="#1a1a50"/><rect x="11" y="9" width="1" height="1" fill="#5aa0e0"/><rect x="6" y="8" width="1" height="1" fill="#5aa0e0"/><rect x="12" y="12" width="1" height="1" fill="#5aa0e0"/><rect x="6" y="12" width="1" height="1" fill="#f0f0a0"/><rect x="8" y="6" width="1" height="1" fill="#7a1040"/><rect x="21" y="13" width="1" height="1" fill="#1a1a50"/><rect x="9" y="10" width="1" height="1" fill="#7a1040"/><rect x="8" y="15" width="1" height="1" fill="#7a1040"/><rect x="4" y="6" width="1" height="1" fill="#1a1a50"/><rect x="5" y="4" width="1" height="1" fill="#ffffff"/></svg>
<svg style="left:488px;top:552px" width="41" height="19" viewBox="0 0 41 19"><rect x="12" y="11" width="1" height="1" fill="#f0b060"/><rect x="31" y="14" width="1" height="1" fill="#111111"/><rect x="33" y="15" width="1" height="1" fill="#8a3020"/><rect x="32" y="5" width="1" height="1" fill="#8a3020"/><rect x="16" y="4" width="1" height="1" fill="#f0f0a0"/><rect x="20" y="4" width="1" height="1" fill="#7a1040"/><rect x="27" y="4" width="1" height="1" fill="#8a3020"/><rect x="13" y="3" width="1" height="1" fill="#1a1a50"/><rect x="23" y="10" width="1" height="1" fill="#111111"/><rect x="17" y="10" width="1" height="1" fill="#f0b060"/><rect x="5" y="7" width="1" height="1" fill="#111111"/><rect x="12" y="8" width="1" height="1" fill="#5aa0e0"/><rect x="40" y="9" width="1" height="1" fill="#8a3020"/><rect x="32" y="12" width="1" height="1" fill="#8a3020"/><rect x="19" y="6" width="1" height="1" fill="#7a1040"/><rect x="25" y="7" width="1" height="1" fill="#1a1a50"/><rect x="22" y="15" width="1" height="1" fill="#f0b060"/><rect x="9" y="9" width="1" height="1" fill="#f0b060"/><rect x="28" y="7" width="1" height="1" fill="#7a1040"/><rect x="8" y="5" width="1" height="1" fill="#7a1040"/><rect x="12" y="7" width="1" height="1" fill="#111111"/><rect x="20" y="5" width="1" height="1" fill="#ffffff"/><rect x="29" y="13" width="1" height="1" fill="#f0b060"/><rect x="18" y="15" width="1" height="1" fill="#8a3020"/><rect x="23" y="14" width="1" height="1" fill="#8a3020"/><rect x="7" y="9" width="1" height="1" fill="#f0b060"/><rect x="11" y="8" width="1" height="1" fill="#7a1040"/><rect x="22" y="9" width="1" height="1" fill="#f0b060"/><rect x="32" y="11" width="1" height="1" fill="#f0b060"/><rect x="31" y="9" width="1" height="1" fill="#1a1a50"/><rect x="24" y="10" width="1" height="1" fill="#8a3020"/><rect x="34" y="15" width="1" height="1" fill="#f0f0a0"/><rect x="19" y="11" width="1" height="1" fill="#5aa0e0"/><rect x="23" y="18" width="1" height="1" fill="#f0b060"/><rect x="15" y="11" width="1" height="1" fill="#f0b060"/><rect x="15" y="5" width="1" height="1" fill="#8a3020"/><rect x="27" y="12" width="1" height="1" fill="#5aa0e0"/><rect x="27" y="12" width="1" height="1" fill="#5aa0e0"/><rect x="20" y="1" width="1" height="1" fill="#7a1040"/><rect x="27" y="8" width="1" height="1" fill="#7a1040"/><rect x="28" y="7" width="1" height="1" fill="#5aa0e0"/><rect x="30" y="11" width="1" height="1" fill="#ffffff"/><rect x="21" y="1" width="1" height="1" fill="#5aa0e0"/><rect x="37" y="14" width="1" height="1" fill="#5aa0e0"/><rect x="16" y="7" width="1" height="1" fill="#5aa0e0"/><rect x="11" y="10" width="1" height="1" fill="#5aa0e0"/><rect x="23" y="5" width="1" height="1" fill="#7a1040"/><rect x="26" y="4" width="1" height="1" fill="#f0f0a0"/><rect x="3" y="7" width="1" height="1" fill="#7a1040"/><rect x="31" y="7" width="1" height="1" fill="#ffffff"/><rect x="20" y="3" width="1" height="1" fill="#5aa0e0"/><rect x="13" y="8" width="1" height="1" fill="#a8d4f4"/><rect x="15" y="12" width="1" height="1" fill="#8a3020"/><rect x="19" y="3" width="1" height="1" fill="#a8d4f4"/><rect x="15" y="6" width="1" height="1" fill="#f0f0a0"/><rect x="17" y="7" width="1" height="1" fill="#111111"/><rect x="24" y="11" width="1" height="1" fill="#f0b060"/><rect x="8" y="8" width="1" height="1" fill="#5aa0e0"/><rect x="32" y="9" width="1" height="1" fill="#1a1a50"/><rect x="12" y="8" width="1" height="1" fill="#1a1a50"/><rect x="17" y="11" width="1" height="1" fill="#1a1a50"/><rect x="6" y="15" width="1" height="1" fill="#1a1a50"/><rect x="34" y="5" width="1" height="1" fill="#a8d4f4"/><rect x="6" y="14" width="1" height="1" fill="#1a1a50"/><rect x="13" y="12" width="1" height="1" fill="#7a1040"/><rect x="5" y="9" width="1" height="1" fill="#5aa0e0"/><rect x="29" y="12" width="1" height="1" fill="#111111"/><rect x="26" y="1" width="1" height="1" fill="#7a1040"/><rect x="19" y="12" width="1" height="1" fill="#a8d4f4"/><rect x="13" y="6" width="1" height="1" fill="#5aa0e0"/><rect x="33" y="2" width="1" height="1" fill="#7a1040"/><rect x="28" y="12" width="1" height="1" fill="#f0b060"/><rect x="33" y="8" width="1" height="1" fill="#7a1040"/><rect x="0" y="15" width="1" height="1" fill="#f0f0a0"/><rect x="39" y="0" width="1" height="1" fill="#1a1a50"/><rect x="22" y="6" width="1" height="1" fill="#1a1a50"/><rect x="3" y="8" width="1" height="1" fill="#8a3020"/><rect x="13" y="1" width="1" height="1" fill="#f0b060"/><rect x="37" y="13" width="1" height="1" fill="#7a1040"/><rect x="22" y="6" width="1" height="1" fill="#7a1040"/><rect x="14" y="6" width="1" height="1" fill="#1a1a50"/><rect x="10" y="5" width="1" height="1" fill="#a8d4f4"/><rect x="18" y="7" width="1" height="1" fill="#7a1040"/><rect x="12" y="18" width="1" height="1" fill="#1a1a50"/><rect x="14" y="11" width="1" height="1" fill="#ffffff"/><rect x="34" y="9" width="1" height="1" fill="#f0b060"/><rect x="18" y="13" width="1" height="1" fill="#1a1a50"/><rect x="12" y="9" width="1" height="1" fill="#1a1a50"/><rect x="32" y="10" width="1" height="1" fill="#111111"/><rect x="19" y="10" width="1" height="1" fill="#f0b060"/><rect x="32" y="5" width="1" height="1" fill="#7a1040"/><rect x="19" y="15" width="1" height="1" fill="#5aa0e0"/><rect x="20" y="10" width="1" height="1" fill="#5aa0e0"/><rect x="18" y="5" width="1" height="1" fill="#a8d4f4"/><rect x="27" y="16" width="1" height="1" fill="#8a3020"/><rect x="22" y="8" width="1" height="1" fill="#f0b060"/><rect x="30" y="8" width="1" height="1" fill="#1a1a50"/><rect x="21" y="12" width="1" height="1" fill="#5aa0e0"/><rect x="32" y="13" width="1" height="1" fill="#ffffff"/><rect x="23" y="12" width="1" height="1" fill="#a8d4f4"/><rect x="23" y="8" width="1" height="1" fill="#ffffff"/><rect x="27" y="12" width="1" height="1" fill="#1a1a50"/><rect x="35" y="10" width="1" height="1" fill="#a8d4f4"/><rect x="24" y="9" width="1" height="1" fill="#a8d4f4"/><rect x="3" y="11" width="1" height="1" fill="#5aa0e0"/><rect x="29" y="7" width="1" height="1" fill="#1a1a50"/><rect x="12" y="5" width="1" height="1" fill="#f0b060"/><rect x="36" y="10" width="1" height="1" fill="#a8d4f4"/><rect x="38" y="0" width="1" height="1" fill="#f0b060"/><rect x="20" y="9" width="1" height="1" fill="#5aa0e0"/><rect x="30" y="11" width="1" height="1" fill="#7a1040"/><rect x="2" y="6" width="1" height="1" fill="#a8d4f4"/><rect x="7" y="15" width="1" height="1" fill="#a8d4f4"/><rect x="35" y="12" width="1" height="1" fill="#1a1a50"/><rect x="2" y="16" width="1" height="1" fill="#1a1a50"/><rect x="12" y="15" width="1" height="1" fill="#f0b060"/><rect x="32" y="10" width="1" height="1" fill="#111111"/><rect x="20" y="8" width="1" height="1" fill="#7a1040"/><rect x="0" y="11" width="1" height="1" fill="#7a1040"/><rect x="19" y="16" width="1" height="1" fill="#ffffff"/><rect x="15" y="12" width="1" height="1" fill="#ffffff"/><rect x="38" y="11" width="1" height="1" fill="#8a3020"/><rect x="16" y="12" width="1" height="1" fill="#7a1040"/><rect x="17" y="4" width="1" height="1" fill="#111111"/><rect x="24" y="8" width="1" height="1" fill="#1a1a50"/><rect x="34" y="13" width="1" height="1" fill="#f0b060"/><rect x="31" y="8" width="1" height="1" fill="#5aa0e0"/><rect x="38" y="5" width="1" height="1" fill="#1a1a50"/><rect x="27" y="8" width="1" height="1" fill="#8a3020"/><rect x="14" y="15" width="1" height="1" fill="#1a1a50"/><rect x="12" y="7" width="1" height="1" fill="#5aa0e0"/><rect x="1" y="11" width="1" height="1" fill="#ffffff"/><rect x="27" y="10" width="1" height="1" fill="#1a1a50"/><rect x="20" y="11" width="1" height="1" fill="#7a1040"/><rect x="6" y="10" width="1" height="1" fill="#1a1a50"/><rect x="29" y="9" width="1" height="1" fill="#7a1040"/><rect x="23" y="13" width="1" height="1" fill="#8a3020"/><rect x="27" y="9" width="1" height="1" fill="#1a1a50"/><rect x="6" y="12" width="1" height="1" fill="#111111"/><rect x="21" y="14" width="1" height="1" fill="#111111"/><rect x="21" y="2" width="1" height="1" fill="#5aa0e0"/><rect x="16" y="14" width="1" height="1" fill="#5aa0e0"/><rect x="20" y="12" width="1" height="1" fill="#f0b060"/><rect x="20" y="12" width="1" height="1" fill="#1a1a50"/><rect x="15" y="18" width="1" height="1" fill="#1a1a50"/><rect x="15" y="13" width="1" height="1" fill="#1a1a50"/><rect x="12" y="9" width="1" height="1" fill="#7a1040"/><rect x="0" y="0" width="1" height="1" fill="#7a1040"/><rect x="21" y="13" width="1" height="1" fill="#5aa0e0"/><rect x="29" y="10" width="1" height="1" fill="#7a1040"/><rect x="35" y="11" width="1" height="1" fill="#ffffff"/><rect x="22" y="11" width="1" height="1" fill="#f0f0a0"/><rect x="28" y="6" width="1" height="1" fill="#5aa0e0"/><rect x="23" y="3" width="1" height="1" fill="#7a1040"/><rect x="32" y="12" width="1" height="1" fill="#ffffff"/><rect x="18" y="10" width="1" height="1" fill="#5aa0e0"/><rect x="25" y="11" width="1" height="1" fill="#5aa0e0"/><rect x="38" y="11" width="1" height="1" fill="#1a1a50"/><rect x="28" y="2" width="1" height="1" fill="#a8d4f4"/><rect x="17" y="7" width="1" height="1" fill="#5aa0e0"/><rect x="23" y="9" width="1" height="1" fill="#f0b060"/><rect x="16" y="9" width="1" height="1" fill="#7a1040"/><rect x="25" y="3" width="1" height="1" fill="#1a1a50"/><rect x="17" y="8" width="1" height="1" fill="#1a1a50"/><rect x="13" y="11" width="1" height="1" fill="#5aa0e0"/><rect x="14" y="5" width="1" height="1" fill="#7a1040"/><rect x="14" y="14" width="1" height="1" fill="#5aa0e0"/><rect x="18" y="9" width="1" height="1" fill="#5aa0e0"/><rect x="13" y="6" width="1" height="1" fill="#a8d4f4"/><rect x="20" y="9" width="1" height="1" fill="#1a1a50"/><rect x="1" y="13" width="1" height="1" fill="#a8d4f4"/><rect x="10" y="7" width="1" height="1" fill="#1a1a50"/><rect x="23" y="10" width="1" height="1" fill="#1a1a50"/><rect x="4" y="2" width="1" height="1" fill="#7a1040"/><rect x="19" y="6" width="1" height="1" fill="#5aa0e0"/><rect x="17" y="14" width="1" height="1" fill="#7a1040"/><rect x="30" y="12" width="1" height="1" fill="#1a1a50"/><rect x="13" y="16" width="1" height="1" fill="#7a1040"/><rect x="33" y="8" width="1" height="1" fill="#7a1040"/><rect x="7" y="5" width="1" height="1" fill="#7a1040"/><rect x="33" y="6" width="1" height="1" fill="#1a1a50"/><rect x="6" y="3" width="1" height="1" fill="#ffffff"/><rect x="2" y="14" width="1" height="1" fill="#f0b060"/><rect x="23" y="12" width="1" height="1" fill="#a8d4f4"/><rect x="26" y="8" width="1" height="1" fill="#5aa0e0"/><rect x="26" y="11" width="1" height="1" fill="#8a3020"/><rect x="23" y="7" width="1" height="1" fill="#f0f0a0"/><rect x="29" y="4" width="1" height="1" fill="#111111"/><rect x="23" y="7" width="1" height="1" fill="#ffffff"/><rect x="0" y="11" width="1" height="1" fill="#5aa0e0"/><rect x="14" y="6" width="1" height="1" fill="#1a1a50"/><rect x="5" y="12" width="1" height="1" fill="#f0b060"/><rect x="13" y="9" width="1" height="1" fill="#7a1040"/><rect x="10" y="6" width="1" height="1" fill="#1a1a50"/><rect x="5" y="11" width="1" height="1" fill="#f0b060"/><rect x="31" y="3" width="1" height="1" fill="#a8d4f4"/><rect x="25" y="10" width="1" height="1" fill="#a8d4f4"/><rect x="6" y="15" width="1" height="1" fill="#f0f0a0"/><rect x="17" y="9" width="1" height="1" fill="#111111"/><rect x="38" y="16" width="1" height="1" fill="#5aa0e0"/><rect x="22" y="4" width="1" height="1" fill="#7a1040"/><rect x="20" y="0" width="1" height="1" fill="#111111"/><rect x="26" y="8" width="1" height="1" fill="#7a1040"/><rect x="38" y="9" width="1" height="1" fill="#7a1040"/><rect x="26" y="8" width="1" height="1" fill="#8a3020"/><rect x="24" y="8" width="1" height="1" fill="#5aa0e0"/><rect x="13" y="7" width="1" height="1" fill="#5aa0e0"/><rect x="27" y="7" width="1" height="1" fill="#f0b060"/><rect x="28" y="13" width="1" height="1" fill="#f0b060"/><rect x="22" y="12" width="1" height="1" fill="#f0f0a0"/><rect x="21" y="13" width="1" height="1" fill="#1a1a50"/><rect x="23" y="11" width="1" height="1" fill="#5aa0e0"/><rect x="10" y="1" width="1" height="1" fill="#1a1a50"/><rect x="22" y="6" width="1" height="1" fill="#f0f0a0"/><rect x="32" y="8" width="1" height="1" fill="#f0f0a0"/><rect x="0" y="5" width="1" height="1" fill="#7a1040"/><rect x="20" y="14" width="1" height="1" fill="#a8d4f4"/><rect x="19" y="5" width="1" height="1" fill="#a8d4f4"/><rect x="35" y="9" width="1" height="1" fill="#5aa0e0"/><rect x="18" y="10" width="1" height="1" fill="#1a1a50"/><rect x="28" y="15" width="1" height="1" fill="#7a1040"/><rect x="16" y="14" width="1" height="1" fill="#5aa0e0"/><rect x="0" y="0" width="1" height="1" fill="#ffffff"/><rect x="18" y="2" width="1" height="1" fill="#1a1a50"/><rect x="29" y="14" width="1" height="1" fill="#a8d4f4"/><rect x="11" y="11" width="1" height="1" fill="#7a1040"/><rect x="26" y="11" width="1" height="1" fill="#111111"/><rect x="24" y="9" width="1" height="1" fill="#ffffff"/><rect x="17" y="11" width="1" height="1" fill="#5aa0e0"/><rect x="9" y="8" width="1" height="1" fill="#5aa0e0"/><rect x="13" y="8" width="1" height="1" fill="#ffffff"/><rect x="23" y="7" width="1" height="1" fill="#7a1040"/><rect x="28" y="8" width="1" height="1" fill="#1a1a50"/><rect x="16" y="9" width="1" height="1" fill="#1a1a50"/><rect x="34" y="4" width="1" height="1" fill="#a8d4f4"/><rect x="31" y="0" width="1" height="1" fill="#7a1040"/><rect x="11" y="5" width="1" height="1" fill="#5aa0e0"/><rect x="8" y="6" width="1" height="1" fill="#ffffff"/><rect x="37" y="6" width="1" height="1" fill="#1a1a50"/><rect x="20" y="9" width="1" height="1" fill="#7a1040"/><rect x="9" y="8" width="1" height="1" fill="#1a1a50"/><rect x="34" y="17" width="1" height="1" fill="#7a1040"/><rect x="34" y="9" width="1" height="1" fill="#1a1a50"/><rect x="25" y="11" width="1" height="1" fill="#ffffff"/><rect x="10" y="4" width="1" height="1" fill="#a8d4f4"/><rect x="23" y="7" width="1" height="1" fill="#5aa0e0"/><rect x="35" y="11" width="1" height="1" fill="#8a3020"/><rect x="24" y="3" width="1" height="1" fill="#7a1040"/><rect x="11" y="12" width="1" height="1" fill="#f0b060"/><rect x="35" y="12" width="1" height="1" fill="#1a1a50"/><rect x="21" y="11" width="1" height="1" fill="#1a1a50"/><rect x="16" y="7" width="1" height="1" fill="#8a3020"/><rect x="20" y="10" width="1" height="1" fill="#111111"/><rect x="8" y="8" width="1" height="1" fill="#f0f0a0"/><rect x="29" y="8" width="1" height="1" fill="#1a1a50"/><rect x="32" y="12" width="1" height="1" fill="#1a1a50"/><rect x="19" y="12" width="1" height="1" fill="#8a3020"/><rect x="22" y="11" width="1" height="1" fill="#5aa0e0"/><rect x="24" y="13" width="1" height="1" fill="#ffffff"/><rect x="22" y="18" width="1" height="1" fill="#111111"/><rect x="28" y="5" width="1" height="1" fill="#f0b060"/><rect x="29" y="4" width="1" height="1" fill="#7a1040"/><rect x="3" y="12" width="1" height="1" fill="#ffffff"/><rect x="35" y="4" width="1" height="1" fill="#a8d4f4"/><rect x="17" y="8" width="1" height="1" fill="#1a1a50"/><rect x="22" y="10" width="1" height="1" fill="#7a1040"/><rect x="15" y="7" width="1" height="1" fill="#1a1a50"/><rect x="19" y="8" width="1" height="1" fill="#1a1a50"/><rect x="14" y="4" width="1" height="1" fill="#8a3020"/><rect x="23" y="10" width="1" height="1" fill="#ffffff"/><rect x="21" y="6" width="1" height="1" fill="#f0f0a0"/><rect x="23" y="8" width="1" height="1" fill="#8a3020"/><rect x="25" y="8" width="1" height="1" fill="#1a1a50"/><rect x="21" y="10" width="1" height="1" fill="#111111"/><rect x="36" y="13" width="1" height="1" fill="#111111"/><rect x="19" y="11" width="1" height="1" fill="#7a1040"/><rect x="24" y="3" width="1" height="1" fill="#5aa0e0"/><rect x="15" y="13" width="1" height="1" fill="#7a1040"/><rect x="4" y="17" width="1" height="1" fill="#7a1040"/><rect x="18" y="5" width="1" height="1" fill="#5aa0e0"/><rect x="22" y="3" width="1" height="1" fill="#f0b060"/><rect x="29" y="4" width="1" height="1" fill="#7a1040"/><rect x="21" y="8" width="1" height="1" fill="#f0f0a0"/><rect x="22" y="5" width="1" height="1" fill="#8a3020"/><rect x="34" y="11" width="1" height="1" fill="#8a3020"/><rect x="23" y="8" width="1" height="1" fill="#5aa0e0"/><rect x="20" y="9" width="1" height="1" fill="#1a1a50"/><rect x="15" y="16" width="1" height="1" fill="#7a1040"/><rect x="33" y="9" width="1" height="1" fill="#f0b060"/><rect x="13" y="2" width="1" height="1" fill="#f0b060"/><rect x="5" y="8" width="1" height="1" fill="#1a1a50"/><rect x="18" y="12" width="1" height="1" fill="#8a3020"/><rect x="21" y="11" width="1" height="1" fill="#111111"/><rect x="21" y="4" width="1" height="1" fill="#8a3020"/><rect x="15" y="8" width="1" height="1" fill="#5aa0e0"/><rect x="13" y="12" width="1" height="1" fill="#a8d4f4"/><rect x="35" y="5" width="1" height="1" fill="#a8d4f4"/><rect x="22" y="8" width="1" height="1" fill="#1a1a50"/><rect x="16" y="13" width="1" height="1" fill="#f0f0a0"/><rect x="9" y="9" width="1" height="1" fill="#111111"/><rect x="21" y="14" width="1" height="1" fill="#f0f0a0"/><rect x="6" y="5" width="1" height="1" fill="#ffffff"/><rect x="14" y="6" width="1" height="1" fill="#5aa0e0"/><rect x="6" y="11" width="1" height="1" fill="#5aa0e0"/><rect x="26" y="13" width="1" height="1" fill="#5aa0e0"/><rect x="15" y="8" width="1" height="1" fill="#f0b060"/><rect x="9" y="4" width="1" height="1" fill="#f0f0a0"/><rect x="23" y="12" width="1" height="1" fill="#8a3020"/><rect x="27" y="4" width="1" height="1" fill="#8a3020"/><rect x="25" y="12" width="1" height="1" fill="#5aa0e0"/><rect x="12" y="7" width="1" height="1" fill="#1a1a50"/><rect x="17" y="11" width="1" height="1" fill="#8a3020"/><rect x="27" y="9" width="1" height="1" fill="#111111"/><rect x="29" y="11" width="1" height="1" fill="#1a1a50"/><rect x="25" y="3" width="1" height="1" fill="#a8d4f4"/><rect x="19" y="11" width="1" height="1" fill="#7a1040"/><rect x="15" y="17" width="1" height="1" fill="#f0b060"/><rect x="31" y="10" width="1" height="1" fill="#a8d4f4"/><rect x="15" y="4" width="1" height="1" fill="#111111"/><rect x="19" y="10" width="1" height="1" fill="#5aa0e0"/><rect x="11" y="6" width="1" height="1" fill="#8a3020"/><rect x="21" y="17" width="1" height="1" fill="#8a3020"/><rect x="3" y="6" width="1" height="1" fill="#a8d4f4"/><rect x="30" y="4" width="1" height="1" fill="#111111"/><rect x="34" y="4" width="1" height="1" fill="#8a3020"/><rect x="13" y="8" width="1" height="1" fill="#1a1a50"/><rect x="12" y="5" width="1" height="1" fill="#5aa0e0"/><rect x="19" y="15" width="1" height="1" fill="#a8d4f4"/><rect x="21" y="13" width="1" height="1" fill="#8a3020"/><rect x="14" y="7" width="1" height="1" fill="#a8d4f4"/><rect x="18" y="9" width="1" height="1" fill="#a8d4f4"/><rect x="3" y="8" width="1" height="1" fill="#1a1a50"/><rect x="28" y="7" width="1" height="1" fill="#7a1040"/><rect x="10" y="12" width="1" height="1" fill="#7a1040"/><rect x="34" y="10" width="1" height="1" fill="#1a1a50"/><rect x="14" y="0" width="1" height="1" fill="#1a1a50"/><rect x="15" y="9" width="1" height="1" fill="#ffffff"/><rect x="13" y="10" width="1" height="1" fill="#f0b060"/><rect x="4" y="9" width="1" height="1" fill="#5aa0e0"/><rect x="8" y="8" width="1" height="1" fill="#f0b060"/><rect x="24" y="15" width="1" height="1" fill="#a8d4f4"/><rect x="18" y="3" width="1" height="1" fill="#111111"/><rect x="29" y="10" width="1" height="1" fill="#a8d4f4"/><rect x="24" y="10" width="1" height="1" fill="#a8d4f4"/><rect x="8" y="5" width="1" height="1" fill="#ffffff"/><rect x="19" y="12" width="1" height="1" fill="#8a3020"/><rect x="32" y="8" width="1" height="1" fill="#1a1a50"/><rect x="34" y="14" width="1" height="1" fill="#111111"/><rect x="26" y="15" width="1" height="1" fill="#8a3020"/><rect x="10" y="14" width="1" height="1" fill="#a8d4f4"/><rect x="11" y="10" width="1" height="1" fill="#f0f0a0"/><rect x="8" y="3" width="1" height="1" fill="#f0b060"/><rect x="6" y="15" width="1" height="1" fill="#5aa0e0"/><rect x="15" y="3" width="1" height="1" fill="#a8d4f4"/><rect x="14" y="5" width="1" height="1" fill="#8a3020"/><rect x="23" y="5" width="1" height="1" fill="#111111"/><rect x="16" y="13" width="1" height="1" fill="#a8d4f4"/><rect x="17" y="8" width="1" height="1" fill="#5aa0e0"/><rect x="26" y="12" width="1" height="1" fill="#a8d4f4"/><rect x="40" y="12" width="1" height="1" fill="#5aa0e0"/><rect x="21" y="7" width="1" height="1" fill="#5aa0e0"/><rect x="19" y="8" width="1" height="1" fill="#7a1040"/><rect x="21" y="11" width="1" height="1" fill="#5aa0e0"/><rect x="20" y="11" width="1" height="1" fill="#1a1a50"/><rect x="24" y="7" width="1" height="1" fill="#f0b060"/><rect x="16" y="11" width="1" height="1" fill="#a8d4f4"/><rect x="22" y="7" width="1" height="1" fill="#8a3020"/><rect x="5" y="4" width="1" height="1" fill="#111111"/><rect x="32" y="6" width="1" height="1" fill="#111111"/><rect x="24" y="7" width="1" height="1" fill="#8a3020"/><rect x="21" y="11" width="1" height="1" fill="#f0b060"/><rect x="17" y="7" width="1" height="1" fill="#7a1040"/><rect x="19" y="12" width="1" height="1" fill="#1a1a50"/><rect x="6" y="10" width="1" height="1" fill="#f0b060"/><rect x="14" y="9" width="1" height="1" fill="#f0b060"/><rect x="20" y="11" width="1" height="1" fill="#ffffff"/><rect x="21" y="9" width="1" height="1" fill="#5aa0e0"/><rect x="6" y="10" width="1" height="1" fill="#111111"/><rect x="16" y="13" width="1" height="1" fill="#a8d4f4"/><rect x="34" y="12" width="1" height="1" fill="#111111"/><rect x="19" y="8" width="1" height="1" fill="#7a1040"/><rect x="9" y="0" width="1" height="1" fill="#5aa0e0"/><rect x="22" y="7" width="1" height="1" fill="#f0b060"/><rect x="38" y="10" width="1" height="1" fill="#111111"/><rect x="24" y="10" width="1" height="1" fill="#111111"/><rect x="11" y="12" width="1" height="1" fill="#f0f0a0"/><rect x="18" y="13" width="1" height="1" fill="#5aa0e0"/><rect x="0" y="6" width="1" height="1" fill="#5aa0e0"/><rect x="12" y="13" width="1" height="1" fill="#5aa0e0"/><rect x="11" y="9" width="1" height="1" fill="#f0f0a0"/><rect x="16" y="11" width="1" height="1" fill="#f0b060"/><rect x="23" y="5" width="1" height="1" fill="#5aa0e0"/><rect x="19" y="7" width="1" height="1" fill="#111111"/><rect x="8" y="12" width="1" height="1" fill="#a8d4f4"/><rect x="17" y="9" width="1" height="1" fill="#5aa0e0"/></svg>
<!-- status -->
<div style="left:10px;top:545px;width:989px;height:7px;background:linear-gradient(#f0f0f0 0%,#dcdcdc 50%,#efefef 80%,#f0f0f0 100%)"></div>
<div class="sep" style="left:132px;top:554px;height:20px;background:#d0d0d0"></div>
<div class="sep" style="left:442px;top:554px;height:20px;background:#d0d0d0"></div>
<div class="sep" style="left:535px;top:554px;height:20px;background:#d0d0d0"></div>
<div class="sep" style="left:695px;top:554px;height:20px;background:#d0d0d0"></div>

<!-- texts -->
<span class="t" style="left:32.0px;top:13.02px;font-size:11.5px;color:#000;letter-spacing:-0.383px;">Mietspiegel - Ratingen</span>
<span class="t" style="left:16.5px;top:34.84px;font-size:12px;color:#000;letter-spacing:-0.303px;">Datei</span>
<span class="t" style="left:56.5px;top:34.84px;font-size:12px;color:#000;letter-spacing:-0.285px;">Bearbeiten</span>
<span class="t" style="left:125.6px;top:34.84px;font-size:12px;color:#000;letter-spacing:0.049px;">Ansicht</span>
<span class="t" style="left:178.8px;top:34.84px;font-size:12px;color:#000;letter-spacing:-0.586px;">Extras</span>
<span class="t" style="left:223.0px;top:34.84px;font-size:12px;color:#000;letter-spacing:0.157px;">Hilfe</span>
<span class="t" style="left:19.5px;top:95.19px;font-size:11px;color:#000;letter-spacing:-0.306px;">Bezeichnung:</span>
<span class="t" style="left:19.5px;top:119.19px;font-size:11px;color:#000;letter-spacing:-0.209px;">Gültig ab:</span>
<span class="t" style="left:19.5px;top:143.19px;font-size:11px;color:#000;letter-spacing:0.004px;">Objekte:</span>
<span class="t" style="left:19.5px;top:167.19px;font-size:11px;color:#000;letter-spacing:-0.136px;">Flächenarten:</span>
<span class="t" style="left:96.0px;top:95.19px;font-size:11px;color:#000;letter-spacing:-0.218px;">Ratingen</span>
<span class="t" style="left:96.0px;top:119.19px;font-size:11px;color:#000;letter-spacing:0.054px;">01.02.2021</span>
<span class="t" style="left:96.0px;top:143.19px;font-size:11px;color:#000;letter-spacing:-0.036px;">99501,99701,99798,99799</span>
<span class="t" style="left:96.0px;top:167.19px;font-size:11px;color:#000;letter-spacing:-0.083px;">100 Verkaufsfläche,200 Büro,300 Praxis,400 Wohnung,400 Wohnungen,500 Keller/Lagerraum</span>
<span class="t" style="left:31.6px;top:197.19px;font-size:11px;color:#5d6683;letter-spacing:-0.262px;">Kurznotiz</span>
<span class="t" style="left:34.0px;top:230.19px;font-size:11px;color:#000;letter-spacing:-0.127px;">Der Mietspiegel wurde durch die Datenkonvertierung aus einem iX-Haus Mietspiegel erzeugt.</span>
<span class="t" style="left:34.0px;top:256.19px;font-size:11px;color:#000;letter-spacing:-0.069px;">Datenquellen:</span>
<span class="t" style="left:40.0px;top:269.19px;font-size:11px;color:#000;letter-spacing:-0.133px;">Mietspiegel: Ratingen</span>
<div style="left:32px;top:231px;width:929px;height:60px;overflow:hidden"><span class="t" style="left:8.0px;top:51.19px;font-size:11px;color:#000;letter-spacing:-0.302px;">Sondermerkmal Block: Ratingen Lage</span></div>
<span class="t" style="left:51.5px;top:312.19px;font-size:11px;color:#000;letter-spacing:-0.229px;">Mietspiegel Merkmale (4)</span>
<span class="t" style="left:207.0px;top:313.19px;font-size:11px;color:#000;letter-spacing:-0.264px;">Mietspiegel Basismieten (8)</span>
<span class="t" style="left:373.0px;top:313.19px;font-size:11px;color:#000;letter-spacing:-0.161px;">Termine</span>
<span class="t" style="left:447.0px;top:313.19px;font-size:11px;color:#000;letter-spacing:0.017px;">Historie (4)</span>
<span class="t" style="left:187.7px;top:339.84px;font-size:12px;color:#35466b;letter-spacing:-0.275px;">Diagnose</span>
<span class="t" style="left:42.7px;top:366.19px;font-size:11px;color:#000;letter-spacing:-0.452px;">Numm...</span>
<span class="t" style="left:101.7px;top:366.19px;font-size:11px;color:#000;letter-spacing:-0.711px;">Name</span>
<span class="t" style="left:164.9px;top:366.19px;font-size:11px;color:#000;letter-spacing:-0.145px;">Typ</span>
<span class="t" style="left:281.8px;top:366.19px;font-size:11px;color:#000;letter-spacing:-0.255px;">Element für Basismiete</span>
<span class="t" style="left:409.9px;top:366.19px;font-size:11px;color:#000;letter-spacing:-0.128px;">Flächenzuordnung notwendig</span>
<span class="t" style="left:571.2px;top:366.19px;font-size:11px;color:#000;letter-spacing:-0.072px;">Zu-/Abschlagsart</span>
<span class="t" style="left:673.0px;top:366.19px;font-size:11px;color:#000;letter-spacing:-0.174px;">Datenquelle</span>
<span class="t" style="left:778.3px;top:366.19px;font-size:11px;color:#000;letter-spacing:-0.268px;">Beschrieb Variable</span>
<span class="t" style="left:885.4px;top:366.19px;font-size:11px;color:#000;letter-spacing:0.003px;">Deaktiviert</span>
<span class="t" style="right:914.8px;top:409.19px;font-size:11px;color:#000;">1</span>
<span class="t" style="left:101.7px;top:409.19px;font-size:11px;color:#000;letter-spacing:-0.217px;">Baujahr</span>
<span class="t" style="left:164.9px;top:409.19px;font-size:11px;color:#000;letter-spacing:-0.278px;">Element für Basismiete</span>
<span class="t" style="left:281.8px;top:409.19px;font-size:11px;color:#000;letter-spacing:-0.281px;">Element 1</span>
<span class="t" style="left:673.0px;top:409.19px;font-size:11px;color:#000;letter-spacing:-0.203px;">Baujahr</span>
<span class="t" style="right:914.8px;top:430.19px;font-size:11px;color:#000;">2</span>
<span class="t" style="left:101.7px;top:430.19px;font-size:11px;color:#000;letter-spacing:-0.439px;">Fläche</span>
<span class="t" style="left:164.9px;top:430.19px;font-size:11px;color:#000;letter-spacing:-0.278px;">Element für Basismiete</span>
<span class="t" style="left:281.8px;top:430.19px;font-size:11px;color:#000;letter-spacing:-0.281px;">Element 2</span>
<span class="t" style="left:673.0px;top:430.19px;font-size:11px;color:#000;letter-spacing:-0.240px;">Flächengröße</span>
<span class="t" style="right:914.8px;top:451.69px;font-size:11px;color:#000;">3</span>
<span class="t" style="left:101.7px;top:451.69px;font-size:11px;color:#000;letter-spacing:-0.106px;">Wohnlage1</span>
<span class="t" style="left:164.9px;top:451.69px;font-size:11px;color:#000;letter-spacing:-0.220px;">Zu- und Abschläge</span>
<span class="t" style="left:571.2px;top:451.69px;font-size:11px;color:#000;letter-spacing:0.027px;">Prozentwert</span>
<span class="t" style="left:673.0px;top:451.69px;font-size:11px;color:#000;letter-spacing:-0.272px;">Manuelle Zuweisung</span>
<span class="t" style="right:914.8px;top:472.49px;font-size:11px;color:#000;">4</span>
<span class="t" style="left:101.7px;top:472.49px;font-size:11px;color:#000;letter-spacing:-0.142px;">Aufzug</span>
<span class="t" style="left:164.9px;top:472.49px;font-size:11px;color:#000;letter-spacing:-0.220px;">Zu- und Abschläge</span>
<span class="t" style="left:571.2px;top:472.49px;font-size:11px;color:#000;letter-spacing:-0.071px;">Absoluter Betrag</span>
<span class="t" style="left:673.0px;top:472.49px;font-size:11px;color:#000;letter-spacing:-0.272px;">Manuelle Zuweisung</span>
<span class="t" style="left:17.3px;top:554.84px;font-size:12px;color:#000;letter-spacing:-0.054px;">Hauptbenutzer:</span>
<span class="t" style="left:142.5px;top:554.84px;font-size:12px;color:#000;letter-spacing:-0.121px;">gekoppelt (iX-Haus Benutzer Nr. 21, Programmrecht: S)</span>
<span class="t" style="left:453.0px;top:554.84px;font-size:12px;color:#000;letter-spacing:-0.476px;">Lizenz:</span>
<span class="t" style="left:545.3px;top:554.84px;font-size:12px;color:#000;letter-spacing:-0.377px;">Version: 20.20.3</span>
</body></html>
